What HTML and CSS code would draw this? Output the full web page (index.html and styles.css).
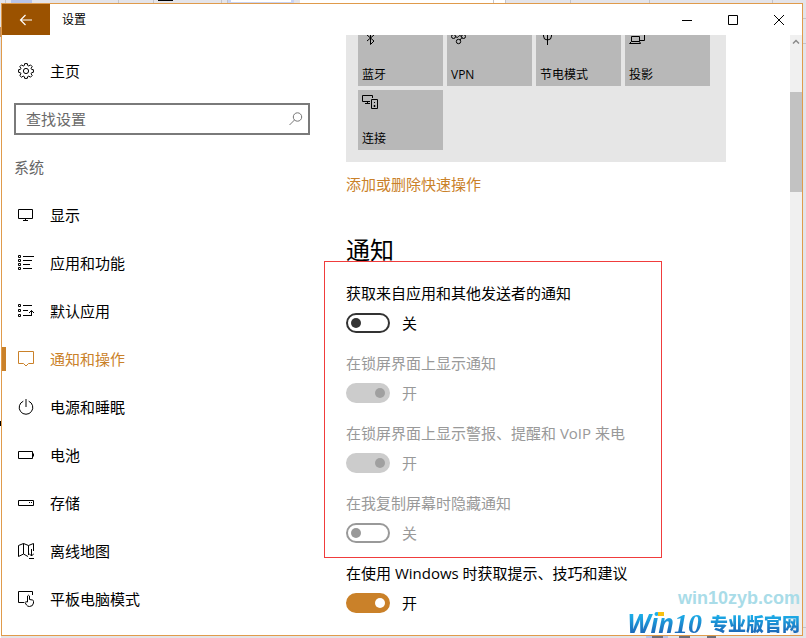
FILE: index.html
```html
<!DOCTYPE html>
<html lang="zh-CN">
<head>
<meta charset="utf-8">
<meta name="viewport" content="width=device-width, initial-scale=1">
<title>设置</title>
<link rel="stylesheet" href="styles.css">
</head>
<body>
<svg class="backdrop" width="806" height="638" aria-hidden="true">
  <path fill="#fff" d="M300 0h205v3H300zM0 70h1v640H0z"/>
  <path fill="#b8c4e8" d="M11 0h21v3H11zM646 636h22v2h-22z"/>
  <path fill="#c8d4f4" d="M228 0h66v3h-66z"/>
  <path fill="#fff" d="M231 0h60v2h-60z"/>
  <path fill="#000" d="M158 0h15v1h-15zM0 421h1v5H0z"/>
  <path fill="#c08a58" d="M0 27h1v10H0z"/>
  <path fill="#6c6e78" d="M652 636h11v2h-11zM679 636h11v2h-11zM707 636h9v2h-9z"/>
  <path stroke="#c4c4ca" d="M5.500 0v3M118.500 0v3M153.500 0v3M221.500 0v3M227.500 0v3M493.500 0v3M505.500 0v3M570.500 0v3M649.500 0v3M772.500 0v3M803 18.500h3M803 43.500h3M803 627.500h3"/>
</svg>
<div class="window">
  <header class="titlebar">
    <button class="back" aria-label="返回">
      <svg width="14" height="12" fill="none" stroke="#fff" stroke-width="1.200"><path d="M13 6H1.500M6.500 1l-5 5 5 5"/></svg>
    </button>
    <span class="title">设置</span>
    <button class="caption" aria-label="最小化"><svg width="10" height="10"><path d="M0 5.500h10"/></svg></button>
    <button class="caption" aria-label="最大化"><svg width="10" height="10"><path d="M.5.500h9v9h-9z"/></svg></button>
    <button class="caption" aria-label="关闭"><svg width="10" height="10"><path d="M0 0l10 10M10 0L0 10"/></svg></button>
  </header>

  <div class="body">
    <aside class="sidebar">
      <a class="item" href="#home">
        <svg class="icon" viewBox="0 0 16 16"><path d="M6.700.6h2.600l.4 1.900 1.100.5 1.700-1.100 1.700 1.700-1.100 1.700.5 1.100 1.800.3v2.600l-1.800.4-.5 1.100 1.100 1.700-1.700 1.700-1.700-1.100-1.100.5-.4 1.800H6.700l-.4-1.800-1.100-.5-1.700 1.100-1.700-1.700 1.100-1.700-.5-1.100-1.800-.4V6.700l1.800-.3.5-1.100-1.100-1.700 1.700-1.700L5.200 3l1.100-.5z"/><circle cx="8" cy="8" r="2.600"/></svg>
        主页
      </a>
      <div class="search">
        <input type="search" placeholder="查找设置" aria-label="查找设置">
        <svg width="14" height="14" fill="none" stroke="#767676"><circle cx="8.500" cy="5" r="4.200"/><path d="M5.500 8L.5 13"/></svg>
      </div>
      <h2 class="group">系统</h2>
      <nav>
        <a class="item" href="#display">
          <svg class="icon" viewBox="0 0 16 16"><path d="M.5 2.500h14v9H.5zM5 13.500h5M7.500 11.500v2"/></svg>
          显示
        </a>
        <a class="item" href="#apps">
          <svg class="icon" viewBox="0 0 16 16"><path d="M.5.500h2v2h-2zM.5 4.500h2v2h-2zM.5 8.500h2v2h-2zM.5 12.500h2v2h-2zM5 1.500h11M5 5.500h9M5 9.500h7M5 13.500h9"/></svg>
          应用和功能
        </a>
        <a class="item" href="#defaults">
          <svg class="icon" viewBox="0 0 16 16"><path d="M.5 1.500h2v2h-2zM.5 6.500h2v2h-2zM.5 11.500h2v2h-2zM5 2.500h9M5 7.500h5M5 12.500h9M13.500 13V7.500M11 10l2.500-2.500L16 10"/></svg>
          默认应用
        </a>
        <a class="item active" href="#notifications" aria-current="page">
          <svg class="icon" viewBox="0 0 16 16"><path d="M.5.500h15v12h-5L8 15l-2.500-2.500h-5z"/></svg>
          通知和操作
        </a>
        <a class="item" href="#power">
          <svg class="icon" viewBox="0 0 16 16"><path d="M5.300 2.200a6.800 6.800 0 1 0 5.400 0M8 0v8"/></svg>
          电源和睡眠
        </a>
        <a class="item" href="#battery">
          <svg class="icon" viewBox="0 0 16 16"><path d="M.5 4.500h14v7H.5zM15.500 6.500v3"/></svg>
          电池
        </a>
        <a class="item" href="#storage">
          <svg class="icon" viewBox="0 0 16 16"><path d="M.5 5.500h15v5H.5zM11 7.500h1M13 7.500h1"/></svg>
          存储
        </a>
        <a class="item" href="#maps">
          <svg class="icon" viewBox="0 0 16 16"><path d="M10 13.500L5.500 11l-5 2.500v-11l5-2 5 2 5-2V8M5.500.500V11M10.500 2.500V12M13.500 6v7M11 10.500l2.500 2.500 2.500-2.500M11 15.500h5"/></svg>
          离线地图
        </a>
        <a class="item" href="#tablet">
          <svg class="icon" viewBox="0 0 16 16"><path d="M6 11.500H.5v-11h14V4M9.500 11V5q1-1.500 2 0v3.500l3 .5q1 .3 1 1.300V12q-.5 3.500-4 3.500-2 0-3-1.500L7 11.500q0-1.200 2.500-.5"/></svg>
          平板电脑模式
        </a>
      </nav>
    </aside>

    <main class="content">
      <div class="quick">
        <button class="tile">
          <svg class="icon" viewBox="0 0 16 16"><path d="M5 5l7 6-3.500 3.500V1L12 5l-7 6"/></svg>
          蓝牙
        </button>
        <button class="tile">
          <svg class="icon" viewBox="0 0 16 16"><circle cx="2.500" cy="6.500" r="2"/><circle cx="7.500" cy="11.500" r="2.200"/><circle cx="12.500" cy="6.500" r="2"/><path d="M4.500 6.500q2 2 3 0t3 0M9 10l2-2.500"/></svg>
          VPN
        </button>
        <button class="tile">
          <svg class="icon" viewBox="0 0 16 16"><path d="M3.500 3v3q0 4 4 4t4-4V3M7.500 5v10"/></svg>
          节电模式
        </button>
        <button class="tile">
          <svg class="icon" viewBox="0 0 16 16"><path d="M2.500 6.500h8v5h-8zM2.500 11.500l-2 2h11l-1-2M8 3.500h7.500v7H11"/></svg>
          投影
        </button>
        <button class="tile">
          <svg class="icon" viewBox="0 0 16 16"><path d="M8 7.500H.5v-6h10V4M3 9.500h5M5.500 7.500v2M9.500 5.500h6v9h-6zM12 8.500h1M12 11.500h1v1h-1z"/></svg>
          连接
        </button>
      </div>
      <a class="link" href="#quick">添加或删除快速操作</a>

      <h1>通知</h1>
      <div class="settings marked">
        <div class="setting">
          <label for="senders">获取来自应用和其他发送者的通知</label>
          <div class="switch"><input type="checkbox" role="switch" id="senders"><span>关</span></div>
        </div>
        <div class="setting disabled">
          <label for="lock">在锁屏界面上显示通知</label>
          <div class="switch"><input type="checkbox" role="switch" id="lock" checked disabled><span>开</span></div>
        </div>
        <div class="setting disabled">
          <label for="alarms">在锁屏界面上显示警报、提醒和 VoIP 来电</label>
          <div class="switch"><input type="checkbox" role="switch" id="alarms" checked disabled><span>开</span></div>
        </div>
        <div class="setting disabled">
          <label for="duplicate">在我复制屏幕时隐藏通知</label>
          <div class="switch"><input type="checkbox" role="switch" id="duplicate" disabled><span>关</span></div>
        </div>
      </div>
      <div class="settings">
        <div class="setting">
          <label for="tips">在使用 Windows 时获取提示、技巧和建议</label>
          <div class="switch"><input type="checkbox" role="switch" id="tips" checked><span>开</span></div>
        </div>
      </div>
    </main>

    <div class="scrollbar" aria-hidden="true">
      <svg width="8" height="5" fill="none" stroke="#8a8a8a" stroke-width="1.500"><path d="M1 4.500l3-3 3 3"/></svg>
      <div class="thumb"></div>
    </div>
  </div>
</div>

<div class="watermark">
  <span class="site">win10zyb.com</span>
  <span class="brand"><b class="latin">Win<span class="digits">10</span></b><b class="han">专业版官网</b></span>
</div>
</body>
</html>
```
FILE: styles.css
```css
*, ::before, ::after {box-sizing: border-box;}
body {
    margin: 0;
    height: 100vh;
    padding: 3px 3px 2px 1px;
    overflow: hidden;
    background: #e4e4e9;
    color: #000;
    font: 15px/20px "Open Sans", "Noto Sans CJK SC", sans-serif;
}
h1, h2 {margin: 0; font-weight: normal;}
a {color: inherit; text-decoration: none;}
button {border: 0; padding: 0; background: none; color: inherit; font: inherit;}
.backdrop {position: absolute; top: 0; left: 0;}

.window {
    position: relative;
    display: flex;
    flex-direction: column;
    height: 100%;
    border: 1px solid #e09b4b;
    background: #fff;
}

/* title bar */
.titlebar {display: flex; align-items: center; flex: none; height: 31px;}
.back {
    display: flex;
    align-items: center;
    justify-content: center;
    width: 48px;
    height: 31px;
    background: #9b5200;
}
.title {flex: 1; padding-left: 12px; font-size: 12px;}
.caption {display: flex; align-items: center; justify-content: center; width: 46px; height: 31px;}
.caption svg {fill: none; stroke: #000;}

.body {display: flex; flex: 1; min-height: 0;}

/* sidebar */
.sidebar {flex: none; width: 320px; padding-top: 12px; overflow: hidden;}
.item {display: flex; align-items: center; gap: 16px; height: 48px; padding-left: 16px;}
.icon {flex: none; width: 16px; height: 16px; fill: none; stroke: currentColor;}
.active {position: relative; color: #ca8129;}
.active::before {
    content: "";
    position: absolute;
    left: 0;
    width: 4px;
    height: 24px;
    background: #ca8129;
}
.search {
    display: flex;
    align-items: center;
    height: 32px;
    margin: 8px 12px 0;
    padding: 0 5px 0 10px;
    border: 2px solid #7a7a7a;
}
.search input {
    flex: 1;
    min-width: 0;
    padding: 0;
    border: 0;
    outline: 0;
    background: none;
    font: inherit;
}
.search input::placeholder {color: #6a6a6a;}
.group {padding: 22px 12px 14px; font-size: 15px; line-height: 20px; color: #666;}

/* content */
.content {flex: 1; min-width: 0; padding-left: 24px; overflow: hidden;}
.quick {
    display: grid;
    grid-template-columns: repeat(4, 85px);
    gap: 4px;
    width: 380px;
    margin-top: -21px;
    padding: 12px;
    background: #e6e6e6;
}
.tile {
    display: flex;
    flex-direction: column;
    align-items: flex-start;
    justify-content: space-between;
    height: 60px;
    padding: 4px 4px 1px;
    background: #b8b8b8;
    font-size: 12px;
}
.link {display: block; margin-top: 12px; color: #ca8129;}
h1 {margin: 40px 0 17px; font-size: 24px; line-height: 32px;}
.settings {display: grid; gap: 20px; margin-bottom: 20px;}
.setting {display: grid; gap: 10px;}
.disabled {color: #999;}
.marked {position: relative;}
.marked::after {
    content: "";
    position: absolute;
    top: -22px;
    bottom: -15px;
    left: -22px;
    width: 338px;
    border: 1px solid #f03c3c;
    pointer-events: none;
}
.switch {display: flex; align-items: center; gap: 12px; height: 20px;}
.switch input {
    appearance: none;
    display: flex;
    align-items: center;
    width: 44px;
    height: 20px;
    margin: 0;
    padding: 0 3px;
    border: 2px solid #333;
    border-radius: 10px;
    color: #333;
}
.switch input::before {
    content: "";
    width: 10px;
    height: 10px;
    border-radius: 50%;
    background: currentColor;
}
.switch input:checked {justify-content: flex-end; border-color: #ca8129; background: #ca8129; color: #fff;}
.switch input:disabled {border-color: #999; color: #999;}
.switch input:checked:disabled {border-color: #ccc; background: #ccc; color: #a0a0a0;}

.scrollbar {flex: none; width: 12px; padding-top: 4px; background: #f0f0f0;}
.scrollbar svg {display: block; margin: 0 auto;}
.thumb {height: 100px; margin-top: 48px; background: #c2c2c2;}

/* site mark over the corner of the window */
.watermark {
    position: absolute;
    right: 6px;
    bottom: 0;
    display: flex;
    flex-direction: column;
    align-items: flex-end;
}
.site {font: bold 18px/20px "Liberation Sans", sans-serif; color: #a9dce8;}
.brand {position: relative; display: flex; align-items: center; gap: 6px; height: 30px;}
.latin, .han {
    background: linear-gradient(#1cb0ea 20%, #1c62b4 90%);
    background-clip: text;
    color: transparent;
}
.latin {padding: 0 2px; font: italic bold 26px/30px "Open Sans", sans-serif;}
.digits {font: italic bold 28px/28px "Liberation Serif", serif;}
.han {font: 900 18px/28px "Noto Sans CJK SC", sans-serif;}
.brand::after {
    content: "";
    position: absolute;
    top: 4px;
    left: 33px;
    width: 6px;
    height: 4px;
    background: #f8c010;
}
```
